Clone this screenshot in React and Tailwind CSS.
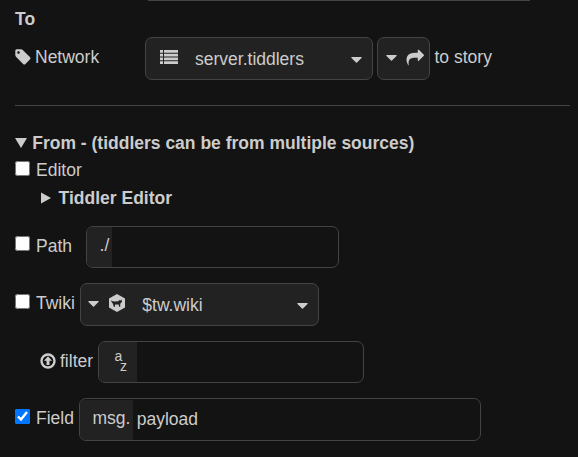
import React from "react";

function Icon({ d, className }) {
  return (
    <svg viewBox="0 0 1792 1792" fill="currentColor" className={`block shrink-0 ${className}`}>
      <path d={d} />
    </svg>
  );
}

const TAG =
  "M576 448q0-53-37.5-90.5t-90.5-37.5-90.5 37.5-37.5 90.5 37.5 90.5 90.5 37.5 90.5-37.5 37.5-90.5zm1067 576q0 53-37 90l-491 492q-39 37-91 37-53 0-90-37l-715-716q-38-37-64.5-101t-26.5-117v-416q0-52 38-90t90-38h416q53 0 117 26.5t102 64.5l715 714q37 39 37 91z";
const SHARE =
  "M1792 640q0 26-19 45l-512 512q-19 19-45 19t-45-19-19-45v-256h-224q-98 0-175.5 6t-154 21.5-133 42.5-105.5 69.5-80 101-48.5 138.5-17.5 181q0 55 5 123 0 6 2.5 23.5t2.5 26.5q0 15-8.5 25t-23.5 10q-16 0-28-17-7-9-13-22t-13.5-30-10.5-24q-127-285-127-451 0-199 53-333 162-403 875-403h224v-256q0-26 19-45t45-19 45 19l512 512q19 19 19 45z";

function Caret({ className = "" }) {
  return (
    <svg viewBox="0 0 11 6" fill="currentColor" className={`block h-[6px] w-[11px] shrink-0 ${className}`}>
      <path d="M0.6 0H10.4Q11 .3 10.5 .9L6 5.6Q5.5 6 5 5.6L.5 .9Q0 .3 .6 0Z" />
    </svg>
  );
}

function ListIcon({ className = "" }) {
  return (
    <svg viewBox="0 0 18 14" fill="currentColor" className={`block h-[14px] w-[18px] shrink-0 ${className}`}>
      {[0, 3.75, 7.5, 11.25].map((y) => (
        <g key={y}>
          <rect x="0" y={y} width="3" height="2.75" />
          <rect x="4" y={y} width="14" height="2.75" />
        </g>
      ))}
    </svg>
  );
}

function WikiIcon({ className = "" }) {
  return (
    <svg viewBox="0 0 16 18" className={`block h-[18px] w-[16px] shrink-0 ${className}`}>
      <path d="M8 0L16 4.5V13.5L8 18L0 13.5V4.5Z" fill="#ccc" />
      <path
        d="M2.2 6.2L3.6 7.3L5.6 7.5L9.2 7.3L10.4 6.1L11.4 6.4L12.6 5.6L13 7.7L12 9.1L11.2 9.8L11.3 12.7H10.1L9.6 10.6L6.5 10.4L5.9 11.2L6.1 12.8H4.7L4.3 10.8L3.6 9.2L2.5 8.1Z"
        fill="#222"
      />
    </svg>
  );
}

function UpIcon({ className = "" }) {
  return (
    <svg viewBox="0 0 16 16" className={`block h-[16px] w-[16px] shrink-0 ${className}`}>
      <circle cx="8" cy="8" r="6.5" fill="none" stroke="currentColor" strokeWidth="2.4" />
      <path d="M8 3.3L12 7.7H9.5V11.9H6.5V7.7H4Z" fill="currentColor" />
    </svg>
  );
}

function Check({ checked = false, className = "" }) {
  return (
    <input type="checkbox" defaultChecked={checked} className={`m-0 block h-[15px] w-[15px] shrink-0 ${className}`} />
  );
}

export default function App() {
  return (
    <div className="h-[457px] w-[578px] overflow-hidden bg-[#131313] pl-[15px] font-['Liberation_Sans',Arial,sans-serif] text-[17.5px] leading-5 text-[#ccc]">
      <div className="ml-[133px] h-px w-[382px] bg-[#444]" />
      <div className="mt-[8px] h-5 font-bold">To</div>

      <div className="mt-[8px] flex h-[43px] items-start">
        <Icon d={TAG} className="-ml-[1px] mt-[10.5px] h-[18px] w-[18px]" />
        <span className="ml-[3px] mt-[10px] w-[110px]">Network</span>
        <div className="flex h-[43px] w-[228px] items-start rounded-[7px] border border-[#444] bg-[#222]">
          <ListIcon className="ml-[14px] mt-[12px]" />
          <span className="ml-[17px] mt-[11px] w-[155.5px]">server.tiddlers</span>
          <Caret className="mt-[19px]" />
        </div>
        <div className="ml-[4px] flex h-[43px] w-[53px] items-start rounded-[7px] border border-[#444] bg-[#222]">
          <Caret className="ml-[8px] mt-[17px]" />
          <Icon d={SHARE} className="ml-[9px] mt-[11px] h-[17.5px] w-[18.5px]" />
        </div>
        <span className="ml-[4.5px] mt-[10px]">to story</span>
      </div>

      <div className="mt-[25px] h-px w-[555px] bg-[#444]" />

      <div className="mt-[27px] flex h-5 items-start font-bold">
        <svg viewBox="0 0 12 10" fill="currentColor" className="mt-[5px] block h-[10px] w-[12px]">
          <path d="M0 0H12L6 10Z" />
        </svg>
        <span className="ml-[5.2px]">From - (tiddlers can be from multiple sources)</span>
      </div>
      <div className="mt-[7px] flex h-5 items-start">
        <Check className="mt-[1px]" />
        <span className="ml-[6px]">Editor</span>
      </div>
      <div className="ml-[26px] mt-[8px] flex h-5 items-start font-bold">
        <svg viewBox="0 0 10 12" fill="currentColor" className="mt-[4px] block h-[12px] w-[10px]">
          <path d="M0 0.5L10 6L0 11.5Z" />
        </svg>
        <span className="ml-[7.6px]">Tiddler Editor</span>
      </div>

      <div className="mt-[18px] flex h-[42px] items-start">
        <Check className="mt-[10px]" />
        <span className="ml-[6px] mt-[10px] w-[50px]">Path</span>
        <div className="flex h-[42px] w-[253px] overflow-hidden rounded-[7px] border border-[#444]">
          <div className="w-[25px] bg-[#222] pl-[12.6px] pt-[8px]">./</div>
        </div>
      </div>

      <div className="mt-[15px] flex h-[43px] items-start">
        <Check className="mt-[11px]" />
        <span className="ml-[6px] mt-[10px] w-[44px]">Twiki</span>
        <div className="flex h-[43px] w-[239px] items-start rounded-[7px] border border-[#444] bg-[#222]">
          <Caret className="ml-[7px] mt-[17px]" />
          <WikiIcon className="ml-[10px] mt-[10.3px]" />
          <span className="ml-[17.3px] mt-[11px] w-[155.2px]">$tw.wiki</span>
          <Caret className="mt-[19px]" />
        </div>
      </div>

      <div className="ml-[25px] mt-[15px] flex h-[42px] items-start">
        <UpIcon className="mt-[12px]" />
        <span className="ml-[4px] mt-[10px] w-[38px]">filter</span>
        <div className="flex h-[42px] w-[266px] overflow-hidden rounded-[7px] border border-[#444]">
          <div className="w-[38px] bg-[#222] pl-[15.5px] pt-[9px] text-[14px] leading-[10px]">
            <div>a</div>
            <div className="pl-[5.5px]">z</div>
          </div>
        </div>
      </div>

      <div className="mt-[15px] flex h-[43px] items-start">
        <Check checked className="mt-[11px]" />
        <span className="ml-[6px] mt-[10px] w-[43px]">Field</span>
        <div className="flex h-[43px] w-[402px] overflow-hidden rounded-[7px] border border-[#444]">
          <div className="mt-px w-[53px] bg-[#222] pl-[12.5px] pt-[8px]">msg.</div>
          <span className="ml-[3.7px] mt-[10px]">payload</span>
        </div>
      </div>
    </div>
  );
}
